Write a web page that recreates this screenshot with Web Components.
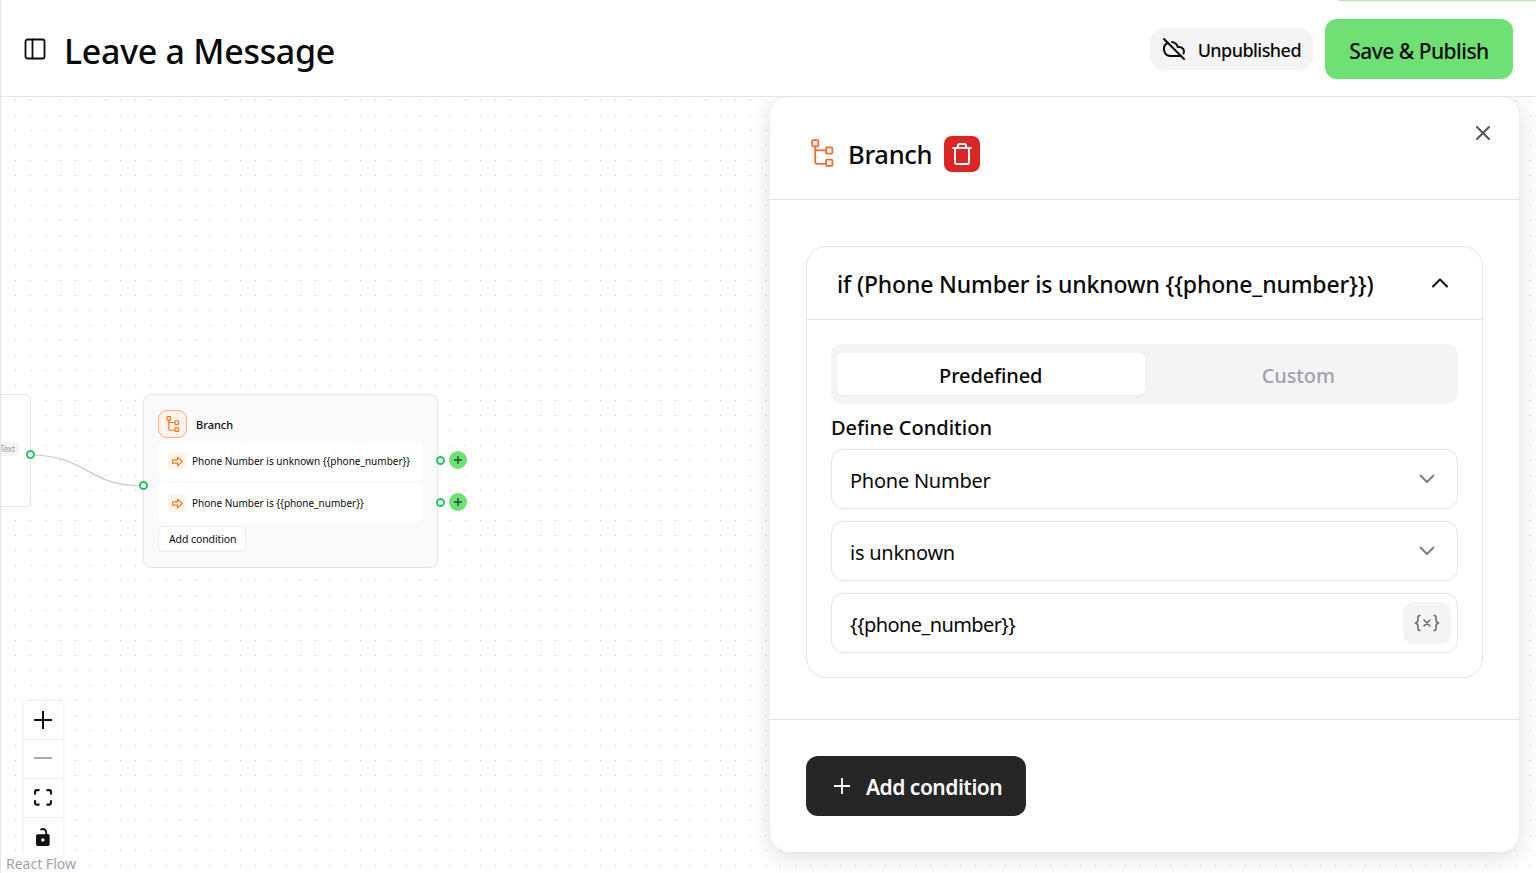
<!DOCTYPE html>
<html lang="en">
<head>
<meta charset="utf-8">
<title>Leave a Message</title>
<style>
  html, body { margin: 0; height: 100%; overflow: hidden; background: #fff; }
  body { font-family: "Noto Sans", "Open Sans", sans-serif; color: #0a0a0a; }
  app-shell { height: 873px; }
</style>
</head>
<body>
<app-shell>
  <app-header slot="header" title="Leave a Message"></app-header>
  <flow-canvas slot="canvas">
    <text-node></text-node>
    <branch-node>
      <branch-row>Phone Number is unknown {{phone_number}}</branch-row>
      <branch-row>Phone Number is {{phone_number}}</branch-row>
    </branch-node>
    <zoom-controls></zoom-controls>
    <side-panel>
      <condition-card heading="if (Phone Number is unknown {{phone_number}})">
        <select-field>Phone Number</select-field>
        <select-field>is unknown</select-field>
        <variable-field>{{phone_number}}</variable-field>
      </condition-card>
    </side-panel>
  </flow-canvas>
</app-shell>

<script>
const BRANCH_ICON = `<path d="M4 7v15.5a2 2 0 0 0 2 2h8.5M4 9.5a2 2 0 0 0 2 2h8.5" transform="translate(0 -.5)"/><rect x="1" y="1" width="6" height="6" rx="1"/><rect x="14.5" y="8" width="6" height="6" rx="1"/><rect x="14.5" y="20" width="6" height="6" rx="1"/>`;

class AppShell extends HTMLElement {
  constructor() {
    super();
    const shadow = this.attachShadow({ mode: 'open' });
    shadow.innerHTML = `
      <style>
        :host { display: flex; flex-direction: column; border-left: 1px solid #e5e5e5; box-sizing: border-box; position: relative; }
        .progress { position: absolute; top: 0; right: 0; width: 197px; height: 1px; background: #b5e6b8; }
      </style>
      <div class="progress"></div>
      <slot name="header"></slot>
      <slot name="canvas"></slot>
    `;
  }
}

class AppHeader extends HTMLElement {
  constructor() {
    super();
    const shadow = this.attachShadow({ mode: 'open' });
    shadow.innerHTML = `
      <style>
        :host { display: flex; align-items: center; height: 97px; flex: none; box-sizing: border-box; padding: 2px 23px 0 22px; border-bottom: 1px solid #e5e5e5; background: #fff; }
        svg { fill: none; stroke: currentColor; stroke-linecap: round; stroke-linejoin: round; flex: none; }
        h1 { margin: 4px 0 0 17px; font-size: 34px; font-weight: 500; line-height: 44px; letter-spacing: -.3px; flex: 1; white-space: nowrap; }
        .status { display: flex; align-items: center; gap: 12px; height: 42px; box-sizing: border-box; padding: 0 12px; border-radius: 14px; background: #f4f4f5; font-size: 18px; font-weight: 500; letter-spacing: -.55px; }
        .status span { padding-top: 2px; }
        .save { display: flex; align-items: center; justify-content: center; margin-left: 12px; width: 188px; height: 60px; box-sizing: border-box; padding-top: 4px; border-radius: 12px; background: #6ee074; font-size: 21px; font-weight: 500; letter-spacing: -.52px; }
      </style>
      <svg width="24" height="24" viewBox="0 0 24 24" stroke-width="1.8"><rect x="2.500" y="2.500" width="19" height="19" rx="2"/><path d="M9.500 2.500v19"/></svg>
      <h1>${this.getAttribute('title')}</h1>
      <div class="status">
        <svg width="24" height="24" viewBox="0 0 24 24" stroke-width="2"><path d="m2 2 20 20"/><path d="M5.782 5.782A7 7 0 0 0 9 19h8.500a4.500 4.500 0 0 0 1.307-.193"/><path d="M21.532 16.500A4.500 4.500 0 0 0 17.500 10h-1.790A7.008 7.008 0 0 0 10 5.070"/></svg>
        <span>Unpublished</span>
      </div>
      <div class="save">Save &amp; Publish</div>
    `;
  }
}

class FlowCanvas extends HTMLElement {
  constructor() {
    super();
    const shadow = this.attachShadow({ mode: 'open' });
    shadow.innerHTML = `
      <style>
        :host { display: block; position: relative; flex: 1; overflow: hidden; background-color: #fff; background-image: radial-gradient(circle, #c4c4c4 .7px, transparent 1px); background-size: 15px 15px; background-position: 7px -4px; }
        svg { position: absolute; left: 0; top: 0; pointer-events: none; }
        .credit { position: absolute; left: 5px; bottom: 0; font-size: 14px; line-height: 18px; color: #9ca3af; background: rgba(255,255,255,.6); }
      </style>
      <svg width="160" height="420" fill="none"><path d="M29 358C86 358 86 389 142 389" stroke="#c9c9c9" stroke-width="1.2"/></svg>
      <slot></slot>
      <div class="credit">React Flow</div>
    `;
  }
}

class FlowHandle extends HTMLElement {
  constructor() {
    super();
    const shadow = this.attachShadow({ mode: 'open' });
    shadow.innerHTML = `
      <style>
        :host { display: block; position: absolute; border-radius: 50%; border: 2px solid #22c55e; background: #fff; width: 5px; height: 5px; }
      </style>
    `;
  }
}

class TextNode extends HTMLElement {
  constructor() {
    super();
    const shadow = this.attachShadow({ mode: 'open' });
    shadow.innerHTML = `
      <style>
        :host { display: block; position: absolute; left: -40px; top: 297px; width: 70px; height: 113px; box-sizing: border-box; border: 1px solid #e5e5e5; border-radius: 6px; background: #fff; }
        .chip { position: absolute; right: 11px; top: 47px; height: 14px; padding: 0 4px; border-radius: 4px; background: #f4f4f5; color: #9a9a9a; font-size: 8px; line-height: 14px; }
        flow-handle { right: -5px; top: 55px; }
      </style>
      <span class="chip">Text</span>
      <flow-handle></flow-handle>
    `;
  }
}

class BranchNode extends HTMLElement {
  constructor() {
    super();
    const shadow = this.attachShadow({ mode: 'open' });
    shadow.innerHTML = `
      <style>
        :host { display: flex; flex-direction: column; position: absolute; left: 142px; top: 297px; width: 295px; height: 174px; box-sizing: border-box; padding: 15px 15px 15px 14px; border: 1px solid #e5e5e5; border-radius: 8px; background: #fafafa; }
        .head { display: flex; align-items: center; gap: 9px; font-size: 11px; font-weight: 500; }
        .badge { display: flex; align-items: center; justify-content: center; width: 29px; height: 28px; box-sizing: border-box; border: 1px solid #f9a877; border-radius: 9px; background: #fff4ec; }
        .badge svg { fill: none; stroke: #f97316; stroke-width: 2; }
        .rows { display: flex; flex-direction: column; gap: 2px; margin-top: 3px; }
        .add { align-self: flex-start; margin-top: 3px; height: 26px; padding: 0 9px 0 10px; box-sizing: border-box; border: 1px solid #eee; border-radius: 5px; background: #fff; font-size: 10.5px; line-height: 25px; letter-spacing: -.1px; }
        flow-handle { left: 292px; }
        flow-handle.in { left: -5px; top: 86px; }
        .plus { position: absolute; left: 305px; width: 18px; height: 18px; border-radius: 50%; background: #6ee074; display: flex; align-items: center; justify-content: center; }
      </style>
      <div class="head">
        <div class="badge"><svg width="14" height="16" viewBox="0 0 22 27">${BRANCH_ICON}</svg></div>
        <span>Branch</span>
      </div>
      <div class="rows"><slot></slot></div>
      <div class="add">Add condition</div>
      <flow-handle class="in"></flow-handle>
      <flow-handle style="top:61px"></flow-handle>
      <flow-handle style="top:103px"></flow-handle>
      <div class="plus" style="top:56px"><svg width="10" height="10" viewBox="0 0 10 10" stroke="#14532d" stroke-width="1.4"><path d="M5 1v8M1 5h8"/></svg></div>
      <div class="plus" style="top:98px"><svg width="10" height="10" viewBox="0 0 10 10" stroke="#14532d" stroke-width="1.4"><path d="M5 1v8M1 5h8"/></svg></div>
    `;
  }
}

class BranchRow extends HTMLElement {
  constructor() {
    super();
    const shadow = this.attachShadow({ mode: 'open' });
    shadow.innerHTML = `
      <style>
        :host { display: flex; align-items: center; gap: 6px; height: 40px; box-sizing: border-box; padding: 0 10px; border-radius: 6px; background: #fff; font-size: 10px; white-space: nowrap; }
        .icon { display: flex; align-items: center; justify-content: center; flex: none; width: 18px; height: 18px; border-radius: 3px; background: #fff5ec; }
      </style>
      <span class="icon"><svg width="13" height="13" viewBox="0 0 24 24" fill="none" stroke="#f97316" stroke-width="2" stroke-linejoin="round"><path d="M3 9h9V4l9 8-9 8v-5H3z"/></svg></span>
      <slot></slot>
    `;
  }
}

class ZoomControls extends HTMLElement {
  constructor() {
    super();
    const shadow = this.attachShadow({ mode: 'open' });
    shadow.innerHTML = `
      <style>
        :host { display: flex; flex-direction: column; position: absolute; left: 23px; top: 604px; width: 39px; box-shadow: 0 0 4px rgba(0,0,0,.1); background: #fff; }
        div { display: flex; align-items: center; justify-content: center; height: 39px; box-sizing: border-box; border-bottom: 1px solid #eee; }
        div:last-child { border-bottom: 0; }
        svg { margin-right: 1px; }
        div + div svg { margin-bottom: 2px; }
      </style>
      <div><svg width="20" height="20" viewBox="0 0 20 20" fill="none" stroke="#111" stroke-width="2"><path d="M10 1v18M1 10h18"/></svg></div>
      <div><svg width="20" height="20" viewBox="0 0 20 20" fill="none" stroke="#aaa" stroke-width="2"><path d="M1 10h18"/></svg></div>
      <div><svg width="18" height="17" viewBox="0 0 32 30" fill="#111"><path d="M3.692 4.63c0-.53.4-.938.939-.938h5.215V0H4.708C2.13 0 0 2.054 0 4.63v5.216h3.692V4.63zM27.354 0h-5.2v3.692h5.17c.53 0 .984.4.984.939v5.215H32V4.631A4.624 4.624 0 0027.354 0zm.954 24.83c0 .532-.4.94-.939.94h-5.215v3.768h5.215c2.577 0 4.631-2.13 4.631-4.707v-5.139h-3.692v5.139zm-23.677.94c-.531 0-.939-.4-.939-.94v-5.138H0v5.139c0 2.577 2.13 4.707 4.708 4.707h5.138V25.77H4.631z"/></svg></div>
      <div><svg width="14" height="18" viewBox="0 0 25 32" fill="#111"><path d="M21.333 10.667H19.81V7.619C19.81 3.429 16.38 0 12.19 0c-1.523 0-3.047.476-4.191 1.333-.762.572-.953 1.524-.381 2.286.571.762 1.524.952 2.286.381.571-.381 1.333-.667 2.095-.667 2.476 0 4.571 2.095 4.571 4.571v3.048H3.048A3.056 3.056 0 000 13.714v15.238A3.056 3.056 0 003.048 32h18.285a3.056 3.056 0 003.048-3.048V13.714a3.056 3.056 0 00-3.048-3.047zM12.19 24.533a3.056 3.056 0 01-3.047-3.047 3.056 3.056 0 013.047-3.048 3.056 3.056 0 013.048 3.048 3.056 3.056 0 01-3.048 3.047z"/></svg></div>
    `;
  }
}

class SidePanel extends HTMLElement {
  constructor() {
    super();
    const shadow = this.attachShadow({ mode: 'open' });
    shadow.innerHTML = `
      <style>
        :host { display: flex; flex-direction: column; position: absolute; left: 769px; top: 0; width: 749px; height: 755px; border-radius: 20px; background: #fff; box-shadow: 0 4px 24px rgba(0,0,0,.14); }
        header { display: flex; align-items: center; height: 103px; flex: none; box-sizing: border-box; padding: 11px 36px 0 41px; border-bottom: 1px solid #e5e5e5; }
        header .branch { fill: none; stroke: #f2692a; stroke-width: 1.7; margin-bottom: 1px; }
        header h2 { margin: 0 12px 0 14px; font-size: 25.5px; font-weight: 500; letter-spacing: -.3px; }
        .trash { display: flex; align-items: center; justify-content: center; width: 36px; height: 36px; border-radius: 8px; background: #dc2626; }
        .close { position: absolute; right: 28px; top: 28px; }
        main { flex: 1; padding: 46px 36px 0; }
        footer { height: 133px; flex: none; box-sizing: border-box; padding-top: 36px; padding-left: 36px; border-top: 1px solid #e5e5e5; }
        .add { display: flex; align-items: center; gap: 15px; width: 220px; height: 60px; box-sizing: border-box; padding-left: 27px; border-radius: 12px; background: #262626; color: #fafafa; font-size: 21px; font-weight: 600; letter-spacing: -.5px; }
        .add span { padding-top: 2px; }
      </style>
      <header>
        <svg class="branch" width="23" height="28" viewBox="0 0 22 27">${BRANCH_ICON}</svg>
        <h2>Branch</h2>
        <div class="trash"><svg width="24" height="24" viewBox="0 0 24 24" fill="none" stroke="#fff" stroke-width="2" stroke-linecap="round" stroke-linejoin="round"><path d="M3 6h18"/><path d="M19 6v14c0 1-1 2-2 2H7c-1 0-2-1-2-2V6"/><path d="M8 6V4c0-1 1-2 2-2h4c1 0 2 1 2 2v2"/></svg></div>
        <svg class="close" width="16" height="16" viewBox="0 0 16 16" fill="none" stroke="#555" stroke-width="2" stroke-linecap="round"><path d="M2 2l12 12M14 2 2 14"/></svg>
      </header>
      <main><slot></slot></main>
      <footer>
        <div class="add">
          <svg width="18" height="18" viewBox="0 0 18 18" fill="none" stroke="#fff" stroke-width="1.8"><path d="M9 1v16M1 9h16"/></svg>
          <span>Add condition</span>
        </div>
      </footer>
    `;
  }
}

class ConditionCard extends HTMLElement {
  constructor() {
    super();
    const shadow = this.attachShadow({ mode: 'open' });
    shadow.innerHTML = `
      <style>
        :host { display: block; box-sizing: border-box; height: 432px; border: 1px solid #e5e5e5; border-radius: 20px; background: #fff; }
        .top { display: flex; align-items: center; justify-content: space-between; height: 73px; padding: 0 30px 0 30px; box-sizing: border-box; border-bottom: 1px solid #e5e5e5; font-size: 23px; font-weight: 500; letter-spacing: -.16px; white-space: nowrap; }
        .top span { padding-top: 2px; }
        .top svg { margin-bottom: 1px; }
        .body { display: flex; flex-direction: column; padding: 24px 24px 0; }
        .tabs { display: flex; align-items: center; height: 60px; padding: 0 6px; box-sizing: border-box; border-radius: 10px; background: #f4f4f5; font-size: 20px; font-weight: 500; letter-spacing: -.13px; }
        .tab { display: flex; align-items: center; justify-content: center; flex: 1; height: 42px; box-sizing: border-box; padding-top: 2px; border-radius: 6px; color: #a1a1aa; }
        .tab.on { background: #fff; color: #0a0a0a; box-shadow: 0 1px 2px rgba(0,0,0,.06); }
        label { margin: 10px 0 7px; font-size: 20px; line-height: 28px; font-weight: 500; }
        .fields { display: flex; flex-direction: column; gap: 12px; }
      </style>
      <div class="top">
        <span>${this.getAttribute('heading')}</span>
        <svg width="24" height="24" viewBox="0 0 24 24" fill="none" stroke="#111" stroke-width="2" stroke-linecap="round" stroke-linejoin="round"><path d="m5 15.500 7-7 7 7"/></svg>
      </div>
      <div class="body">
        <div class="tabs"><div class="tab on">Predefined</div><div class="tab">Custom</div></div>
        <label>Define Condition</label>
        <div class="fields"><slot></slot></div>
      </div>
    `;
  }
}

class SelectField extends HTMLElement {
  constructor() {
    super();
    const shadow = this.attachShadow({ mode: 'open' });
    shadow.innerHTML = `
      <style>
        :host { display: flex; align-items: center; justify-content: space-between; height: 60px; box-sizing: border-box; padding: 0 18px; border: 1px solid #e5e5e5; border-radius: 12px; background: #fff; font-size: 20px; letter-spacing: -.25px; }
        span { padding-top: 2px; }
      </style>
      <span><slot></slot></span>
      <svg width="24" height="24" viewBox="0 0 24 24" fill="none" stroke="#777" stroke-width="1.8" stroke-linecap="round" stroke-linejoin="round"><path d="m5.500 8.500 6.500 6.500 6.500-6.500"/></svg>
    `;
  }
}

class VariableField extends HTMLElement {
  constructor() {
    super();
    const shadow = this.attachShadow({ mode: 'open' });
    shadow.innerHTML = `
      <style>
        :host { display: flex; align-items: center; justify-content: space-between; height: 60px; box-sizing: border-box; padding: 0 6px 0 18px; border: 1px solid #e5e5e5; border-radius: 12px; background: #fff; font-size: 20px; letter-spacing: -.6px; }
        span { padding-top: 2px; }
        .btn { display: flex; align-items: center; justify-content: center; width: 48px; height: 42px; border-radius: 10px; background: #f4f4f5; }
      </style>
      <span><slot></slot></span>
      <div class="btn"><svg width="26" height="18" viewBox="0 0 26 18" fill="none" stroke="#6b6b6b" stroke-width="1.6" stroke-linecap="round" stroke-linejoin="round"><path d="M6 1.500C3.500 1.500 4 3 4 5.500S3.500 8.500 1.500 9C3.500 9.500 4 10 4 12.500s-.5 4 2 4"/><path d="M20 1.500c2.500 0 2 1.500 2 4s.5 3 2.500 3.500c-2 .5-2.500 1-2.500 3.500s.5 4-2 4"/><path d="m10 6 6 6M16 6l-6 6"/></svg></div>
    `;
  }
}

customElements.define('app-shell', AppShell);
customElements.define('app-header', AppHeader);
customElements.define('flow-canvas', FlowCanvas);
customElements.define('flow-handle', FlowHandle);
customElements.define('text-node', TextNode);
customElements.define('branch-node', BranchNode);
customElements.define('branch-row', BranchRow);
customElements.define('zoom-controls', ZoomControls);
customElements.define('side-panel', SidePanel);
customElements.define('condition-card', ConditionCard);
customElements.define('select-field', SelectField);
customElements.define('variable-field', VariableField);
</script>
</body>
</html>
